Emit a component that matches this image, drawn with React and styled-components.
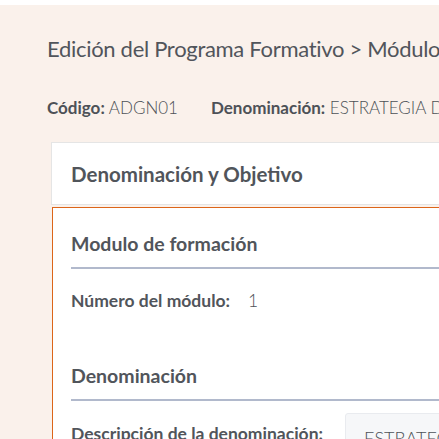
import React from 'react'
import styled, { createGlobalStyle } from 'styled-components'

const GlobalStyle = createGlobalStyle`
  body {
    margin: 0;
    background: #ffffff;
    overflow: hidden;
    font-family: Lato, "Noto Sans", sans-serif;
  }
`

const Page = styled.div`
  margin-top: 5px;
  background: #faf1eb;
  padding: 0 0 40px 47px;
  min-height: 600px;
  width: 1000px;
  color: #4d5157;
`

const Title = styled.h1`
  margin: 0;
  padding-top: 30px;
  font-size: 22px;
  letter-spacing: -0.3px;
  line-height: 28px;
  font-weight: 400;
  color: #51555b;
`

const Meta = styled.div`
  display: flex;
  gap: 33px;
  margin-top: 33px;
  font-size: 17px;
  line-height: 24px;
  span b {
    font-weight: 700;
  }
  span {
    font-weight: 300;
  }
`

const Card = styled.div`
  margin: 22px 0 0 4px;
  height: 61px;
  background: #ffffff;
  border: 1px solid #e5e5e5;
  display: flex;
  align-items: center;
  padding-left: 19px;
  font-size: 20.5px;
  font-weight: 700;
  color: #51555b;
`

const Panel = styled.div`
  margin: 2px 0 0 5px;
  background: #ffffff;
  border: 1px solid #dc6519;
  padding: 22px 0 0 18px;
  min-height: 300px;
`

const Section = styled.div`
  margin-top: ${p => p.$top || 0}px;
`

const Heading = styled.h2`
  margin: 0;
  font-size: 19.5px;
  line-height: 28px;
  font-weight: 700;
  color: #51555b;
  padding-bottom: 9px;
  border-bottom: 2px solid #b1b9cc;
`

const Row = styled.div`
  display: flex;
  align-items: center;
  gap: ${p => p.$gap}px;
  margin-top: ${p => p.$top}px;
  font-size: 17.5px;
  line-height: 24px;
`

const Label = styled.span`
  font-weight: 700;
  color: #51555b;
`

const Value = styled.span`
  font-weight: 300;
`

const Input = styled.div`
  width: 400px;
  height: 40px;
  box-sizing: border-box;
  background: #f6f7f9;
  border: 1px solid #e9ebef;
  border-radius: 3px;
  padding: 12px 0 0 18px;
  font-size: 18px;
  font-weight: 300;
  margin-top: -2px;
  align-self: flex-start;
`

export default function App() {
  return (
    <>
      <GlobalStyle />
      <Page>
        <Title>Edición del Programa Formativo &gt; Módulo de formación</Title>
        <Meta>
          <span><b>Código:</b> ADGN01</span>
          <span><b>Denominación:</b> ESTRATEGIA DE EMPRESA</span>
        </Meta>
        <Card>Denominación y Objetivo</Card>
        <Panel>
          <Section>
            <Heading>Modulo de formación</Heading>
            <Row $gap={18} $top={20}>
              <Label>Número del módulo:</Label>
              <Value>1</Value>
            </Row>
          </Section>
          <Section $top={49}>
            <Heading>Denominación</Heading>
            <Row $gap={22} $top={14}>
              <Label>Descripción de la denominación:</Label>
              <Input>ESTRATEGIA DE EMPRESA</Input>
            </Row>
          </Section>
        </Panel>
      </Page>
    </>
  )
}
